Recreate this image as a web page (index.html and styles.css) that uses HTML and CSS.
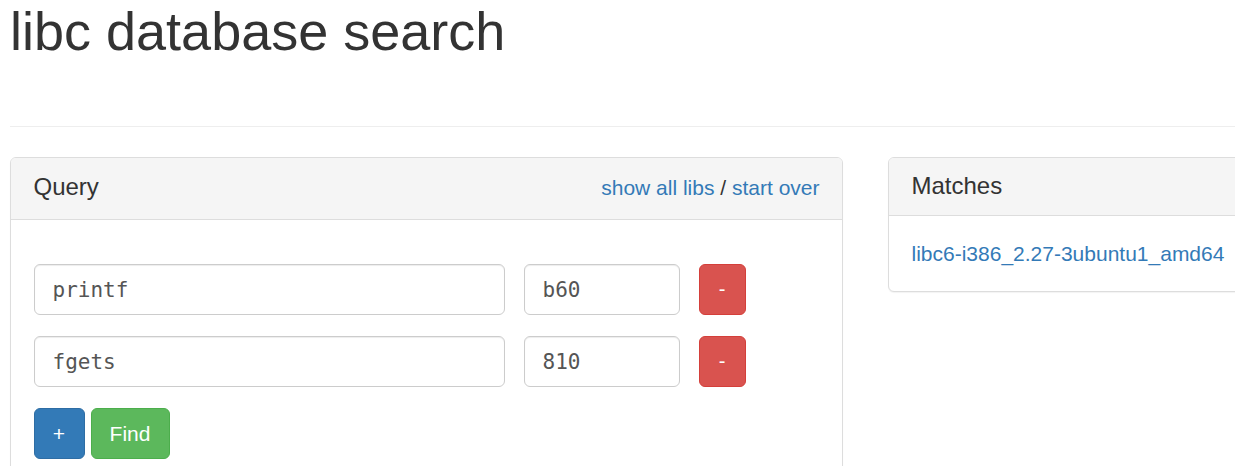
FILE: index.html
```html
<!DOCTYPE html>
<html>
<head>
<meta charset="utf-8">
<title>libc database search</title>
<link rel="stylesheet" href="styles.css">
</head>
<body>
<div class="page">
  <div class="page-header">
    <h1>libc database search</h1>
  </div>
  <div class="row">
    <div class="panel panel-query">
      <div class="panel-heading heading-query">
        <h3 class="panel-title">Query</h3>
        <div class="heading-links"><a href="#">show all libs</a> / <a href="#">start over</a></div>
      </div>
      <div class="panel-body body-query">
        <div class="query-row">
          <input class="form-control input-name" type="text" value="printf">
          <input class="form-control input-addr" type="text" value="b60">
          <button class="btn btn-danger">-</button>
        </div>
        <div class="query-row">
          <input class="form-control input-name" type="text" value="fgets">
          <input class="form-control input-addr" type="text" value="810">
          <button class="btn btn-danger">-</button>
        </div>
        <div class="actions">
          <button class="btn btn-primary btn-plus">+</button>
          <button class="btn btn-success btn-find">Find</button>
        </div>
      </div>
    </div>
    <div class="panel panel-matches">
      <div class="panel-heading">
        <h3 class="panel-title">Matches</h3>
      </div>
      <div class="panel-body">
        <a href="#">libc6-i386_2.27-3ubuntu1_amd64</a>
      </div>
    </div>
  </div>
</div>
</body>
</html>
```

FILE: styles.css
```css
html, body {
  margin: 0;
  padding: 0;
  background: #fff;
  overflow: hidden;
}
body {
  font-family: "Liberation Sans", Arial, Helvetica, sans-serif;
  font-size: 21px;
  line-height: 1.42857;
  color: #333;
}
a {
  color: #337ab7;
  text-decoration: none;
}
.page {
  padding-left: 10px;
  width: 1400px;
}
.page-header {
  height: 126px;
  border-bottom: 1px solid #eee;
  margin-bottom: 30px;
}
h1 {
  margin: 0;
  padding-top: 2px;
  font-size: 54px;
  font-weight: 500;
  line-height: 1.1;
}
.row {
  display: flex;
  align-items: flex-start;
  gap: 45px;
}
.panel {
  background: #fff;
  border: 1px solid #ddd;
  border-radius: 6px;
  box-shadow: 0 1px 1px rgba(0,0,0,0.05);
  box-sizing: border-box;
}
.panel-query {
  width: 833px;
  height: 340px;
}
.panel-matches {
  width: 500px;
}
.panel-heading {
  background: #f5f5f5;
  border-bottom: 1px solid #ddd;
  border-radius: 5px 5px 0 0;
  padding: 15px 22.5px 16px;
}
.heading-query {
  display: flex;
  justify-content: space-between;
  align-items: baseline;
}
.panel-title {
  margin: 0;
  font-size: 24px;
  font-weight: 500;
  line-height: 1.1;
}
.heading-links {
  font-size: 21px;
  line-height: 30px;
}
.panel-body {
  padding: 22.5px;
}
.body-query {
  padding-top: 44px;
}
.query-row {
  display: flex;
  align-items: center;
  margin-bottom: 21px;
}
.form-control {
  box-sizing: border-box;
  height: 51px;
  padding: 9px 18px;
  font-family: "DejaVu Sans Mono", "Liberation Mono", monospace;
  font-size: 21px;
  color: #555;
  background: #fff;
  border: 1px solid #ccc;
  border-radius: 6px;
  box-shadow: inset 0 1px 1px rgba(0,0,0,0.075);
  outline: none;
}
.input-name {
  width: 471px;
  margin-right: 19px;
}
.input-addr {
  width: 156px;
  margin-right: 19px;
}
.btn {
  box-sizing: border-box;
  height: 51px;
  border: 1px solid transparent;
  border-radius: 6px;
  font-family: "Liberation Sans", Arial, sans-serif;
  font-size: 21px;
  color: #fff;
  padding: 0;
  cursor: pointer;
}
.btn-danger {
  width: 47px;
  background: #d9534f;
  border-color: #d43f3a;
  font-size: 20px;
}
.actions {
  display: flex;
  gap: 6px;
}
.btn-primary {
  background: #337ab7;
  border-color: #2e6da4;
}
.btn-plus {
  width: 51px;
}
.btn-success {
  background: #5cb85c;
  border-color: #4cae4c;
}
.btn-find {
  width: 79px;
}
```
